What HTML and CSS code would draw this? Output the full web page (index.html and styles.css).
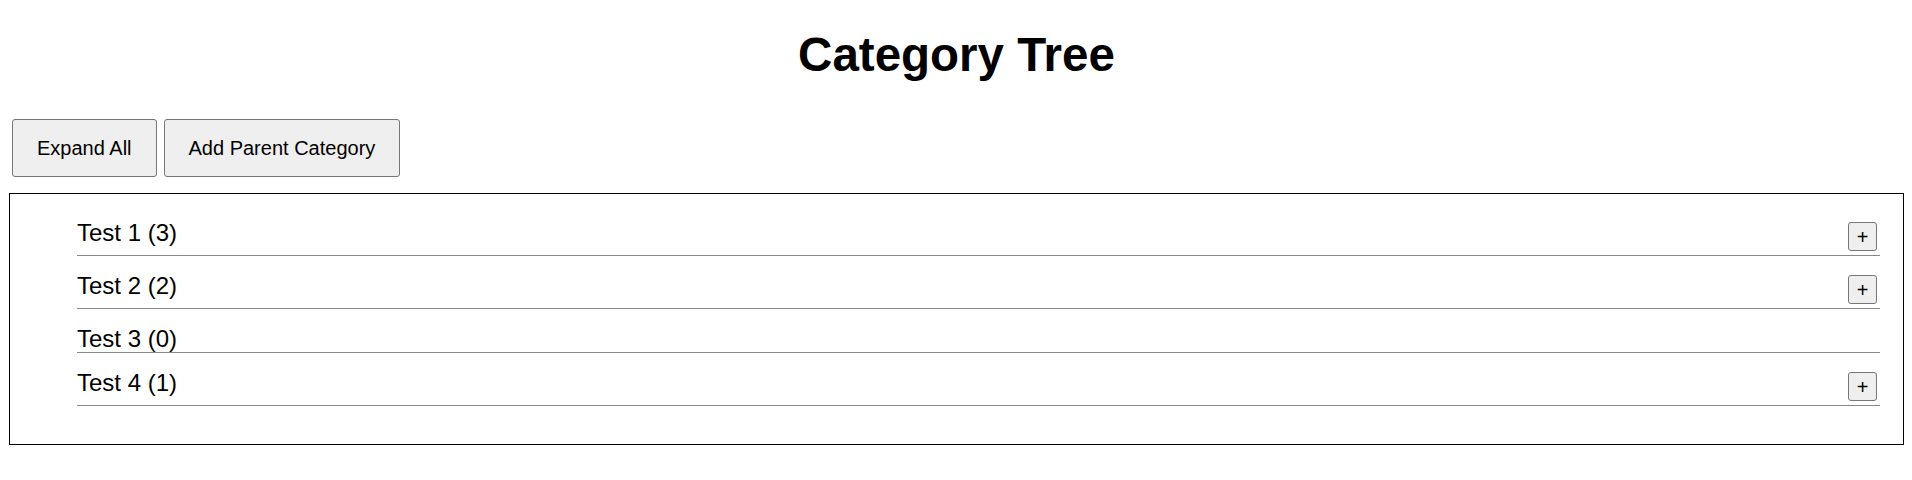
FILE: index.html
```html
<!DOCTYPE html>
<html lang="en">
<head>
  <meta charset="UTF-8">
  <title>Category Tree</title>
  <link rel="stylesheet" href="styles.css">
</head>
<body>
  <h1 class="page-title">Category Tree</h1>

  <div class="toolbar">
    <button class="btn">Expand All</button>
    <button class="btn">Add Parent Category</button>
  </div>

  <div class="tree">
    <ul class="tree-list">
      <li class="tree-item">
        <span class="tree-label">Test 1 (3)</span>
        <button class="toggle">+</button>
      </li>
      <li class="tree-item">
        <span class="tree-label">Test 2 (2)</span>
        <button class="toggle">+</button>
      </li>
      <li class="tree-item">
        <span class="tree-label">Test 3 (0)</span>
      </li>
      <li class="tree-item">
        <span class="tree-label">Test 4 (1)</span>
        <button class="toggle">+</button>
      </li>
    </ul>
  </div>
</body>
</html>
```

FILE: styles.css
```css
body {
  font-family: "Liberation Sans", Arial, sans-serif;
  margin: 0 8px 0 9px;
  background-color: #fff;
  color: #000;
}
.page-title {
  font-size: 47.5px;
  font-weight: bold;
  text-align: center;
  margin: 27px 0 37px;
}
.toolbar {
  display: flex;
  gap: 7px;
  margin-left: 3px;
}
.btn {
  font-family: inherit;
  font-size: 20px;
  line-height: 24px;
  padding: 16px 24px;
  color: #000;
  background: #efefef;
  border: 1px solid #767676;
  border-radius: 3px;
}
.tree {
  margin-top: 16px;
  border: 1px solid #000;
  padding: 9px 23px 38px 67px;
}
.tree-list {
  list-style: none;
  margin: 0;
  padding: 0;
}
.tree-item {
  display: flex;
  justify-content: space-between;
  align-items: flex-start;
  padding-top: 17px;
  border-bottom: 1px solid #888;
  font-size: 24px;
  line-height: 26px;
}
.toggle {
  width: 29px;
  height: 29px;
  margin: 2px 3px 4px 0;
  padding: 0;
  font-family: inherit;
  font-size: 20px;
  line-height: 1;
  color: #000;
  background: #efefef;
  border: 1px solid #767676;
  border-radius: 3px;
}
```
